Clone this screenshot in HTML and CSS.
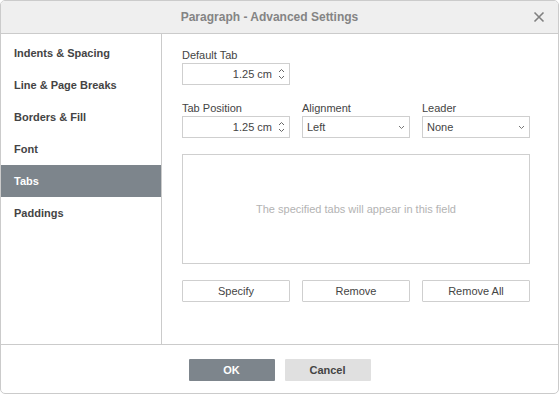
FILE: index.html
```html
<!DOCTYPE html>
<html>
<head>
<meta charset="utf-8">
<link rel="stylesheet" href="styles.css">
</head>
<body>
<div class="dialog">
  <div class="header">
    <span class="title">Paragraph - Advanced Settings</span>
    <span class="close"><svg width="12" height="12" viewBox="0 0 12 12"><path d="M1.5 1.5L10.5 10.5M10.5 1.5L1.5 10.5" stroke="#808080" stroke-width="1.6" fill="none"/></svg></span>
  </div>
  <div class="main">
    <div class="sidebar">
      <div class="item">Indents &amp; Spacing</div>
      <div class="item">Line &amp; Page Breaks</div>
      <div class="item">Borders &amp; Fill</div>
      <div class="item">Font</div>
      <div class="item active">Tabs</div>
      <div class="item">Paddings</div>
    </div>
    <div class="content">
      <div class="field">
        <div class="label">Default Tab</div>
        <div class="input spin"><span class="val">1.25 cm</span><span class="arrows"><svg width="7" height="14" viewBox="0 0 7 14"><path d="M1 5L3.5 2.5L6 5M1 9L3.5 11.5L6 9" stroke="#666" stroke-width="1" fill="none"/></svg></span></div>
      </div>
      <div class="row">
        <div class="field">
          <div class="label">Tab Position</div>
          <div class="input spin"><span class="val">1.25 cm</span><span class="arrows"><svg width="7" height="14" viewBox="0 0 7 14"><path d="M1 5L3.5 2.5L6 5M1 9L3.5 11.5L6 9" stroke="#666" stroke-width="1" fill="none"/></svg></span></div>
        </div>
        <div class="field">
          <div class="label">Alignment</div>
          <div class="input select"><span class="sval">Left</span><svg width="7" height="5" viewBox="0 0 7 5"><path d="M1 1L3.5 3.5L6 1" stroke="#777" stroke-width="1" fill="none"/></svg></div>
        </div>
        <div class="field">
          <div class="label">Leader</div>
          <div class="input select"><span class="sval">None</span><svg width="7" height="5" viewBox="0 0 7 5"><path d="M1 1L3.5 3.5L6 1" stroke="#777" stroke-width="1" fill="none"/></svg></div>
        </div>
      </div>
      <div class="list">The specified tabs will appear in this field</div>
      <div class="row buttons">
        <button class="btn">Specify</button>
        <button class="btn">Remove</button>
        <button class="btn">Remove All</button>
      </div>
    </div>
  </div>
  <div class="footer">
    <button class="fbtn ok">OK</button>
    <button class="fbtn cancel">Cancel</button>
  </div>
</div>
</body>
</html>
```
FILE: styles.css
```css
* { box-sizing: border-box; }
html, body { margin: 0; padding: 0; background: #fff; }
body { font-family: Arial, "Liberation Sans", sans-serif; font-size: 11px; color: #444; }
.dialog {
  width: 559px; height: 394px;
  border: 1px solid #cbcbcb; border-radius: 5px;
  overflow: hidden; display: flex; flex-direction: column; background: #fff;
}
.header {
  height: 33px; background: #efefef; border-bottom: 1px solid #cbcbcb;
  display: flex; align-items: center; justify-content: center; position: relative;
  flex: none; padding-right: 20px;
}
.title { font-weight: bold; font-size: 12px; color: #848484; }
.close { position: absolute; right: 13px; top: 10px; width: 12px; height: 12px; display: flex; }
.main { flex: 1; display: flex; min-height: 0; }
.sidebar { width: 161px; border-right: 1px solid #cbcbcb; padding-top: 3px; flex: none; }
.item { height: 32px; line-height: 32px; padding-left: 13px; font-weight: bold; color: #444; }
.item.active { background: #7d858c; color: #fff; }
.content { flex: 1; padding: 14px 0 0 20px; }
.row { display: flex; gap: 12px; margin-top: 16px; }
.field { width: 108px; }
.label { height: 14px; line-height: 14px; margin-bottom: 1px; }
.input { height: 22px; border: 1px solid #cfcfcf; display: flex; align-items: center; }
.spin { justify-content: flex-end; padding-right: 4px; }
.val { margin-right: 6px; }
.arrows { display: flex; width: 7px; height: 14px; }
.select { justify-content: space-between; padding: 0 4px 0 4px; }
.select svg { margin-top: 1px; }
.list {
  width: 348px; height: 110px; margin-top: 16px; border: 1px solid #cfcfcf;
  display: flex; align-items: center; justify-content: center; color: #b3b3b3;
}
.buttons { margin-top: 16px; }
.btn {
  width: 108px; height: 22px; border: 1px solid #cfcfcf; background: #fff; border-radius: 1px;
  font-family: Arial, "Liberation Sans", sans-serif; font-size: 11px; color: #444; padding: 0;
}
.footer {
  height: 49px; border-top: 1px solid #cbcbcb; flex: none;
  display: flex; justify-content: center; gap: 10px; padding-top: 14px;
}
.fbtn {
  width: 86px; height: 22px; border: none; padding: 0; border-radius: 1px;
  font-family: Arial, "Liberation Sans", sans-serif; font-size: 11px; font-weight: bold;
}
.ok { background: #7d858c; color: #fff; }
.cancel { background: #e0e0e0; color: #444; }
```
